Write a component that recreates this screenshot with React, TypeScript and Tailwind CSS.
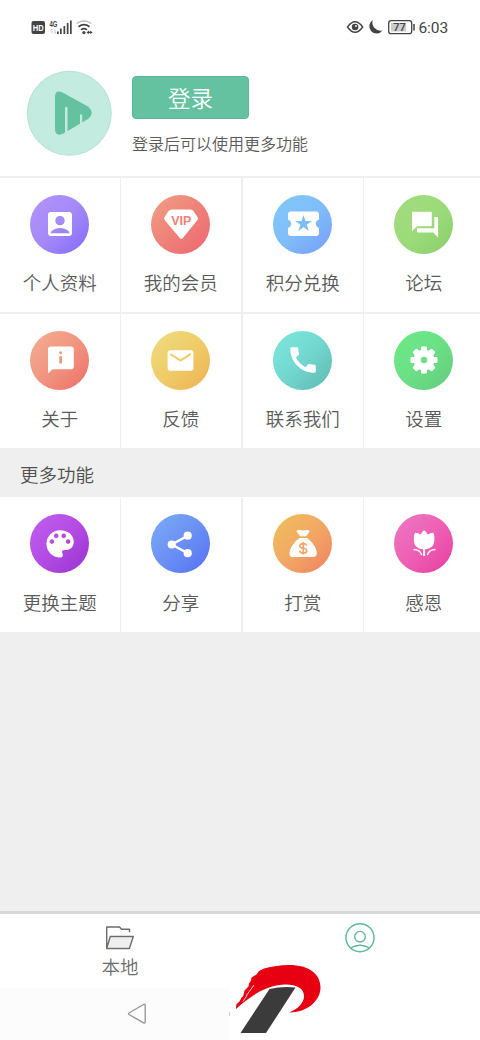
import type { ReactNode } from "react";
import { MdAccountBox, MdCall, MdEmail } from "react-icons/md";

type Item = { label: string; tone: string; icon: ReactNode };

const Glyph = ({ children }: { children: ReactNode }) => (
  <svg viewBox="0 0 60 60" className="size-[60px]" fill="currentColor">
    {children}
  </svg>
);

const VipIcon = () => (
  <Glyph>
    <path d="M21 15.500h18.500q2 0 3 1.600l4 6q1 1.700-.2 3.200L31.800 44q-1.500 1.700-3 0L13.800 26.300q-1.300-1.500-.2-3.200l4-6q1-1.600 3.400-1.600z" />
    <text x="30.300" y="31.400" textAnchor="middle" className="fill-[#ef8078] font-['Liberation_Sans'] text-[12px] font-bold" textLength="20" lengthAdjust="spacingAndGlyphs">VIP</text>
  </Glyph>
);

const TicketIcon = () => (
  <Glyph>
    <path fillRule="evenodd" d="M18 17.500h25q3 0 3 3v5q-3.200 1.300-3.200 4.200t3.200 4.200v5q0 3-3 3H18q-3 0-3-3v-5q3.200-1.300 3.200-4.200T15 25.500v-5q0-3 3-3zM30.500 21l-2 6h-6.400l5.200 3.800-2 6.200 5.200-3.800 5.200 3.800-2-6.200 5.200-3.800h-6.400z" />
  </Glyph>
);

const ForumIcon = () => (
  <Glyph>
    <path d="M19 17.800h18q.8 0 .8 1v12.400q0 1-1 1H23l-5 5V18.800q0-1 1-1z" />
    <path d="M40.300 23h2.900q.9 0 .9 1v19.500l-4.800-5H24q-1 0-1-1V34.300h17.300z" />
  </Glyph>
);

const AboutIcon = () => (
  <Glyph>
    <path fillRule="evenodd" d="M21 16.500h20q2.800 0 2.800 2.800v17.200q0 2.800-2.800 2.800H22.500l-4.500 4.200V19.300q0-2.800 3-2.800zM30.600 21.200a1.500 1.500 0 1 0 .1 0zM29.300 26.300v7.200h2.700v-7.200z" />
  </Glyph>
);

const teeth = ["rotate(0 30 30)", "rotate(45 30 30)", "rotate(90 30 30)", "rotate(135 30 30)"];

const GearIcon = () => (
  <Glyph>
    {teeth.map((turn) => (
      <rect key={turn} x="27" y="16.500" width="6" height="27" rx="1" transform={turn} />
    ))}
    <circle cx="30" cy="30" r="10.500" />
    <circle cx="30" cy="30" r="3.200" className="fill-[#6be085]" />
  </Glyph>
);

const PaletteIcon = () => (
  <Glyph>
    <path fillRule="evenodd" d="M30 16.200c8 0 13.800 5 13.800 11.500 0 5.300-3.800 8.300-8 8.300-3.200 0-4.300.6-3.500 2.900.9 2.700.8 4.500-2.300 4.500A13.600 13.600 0 0 1 30 16.200zM26.200 19.600a2.300 2.300 0 1 0 .01 0zM33.700 19.600a2.300 2.300 0 1 0 .01 0zM21.900 25.300a2.300 2.300 0 1 0 .01 0zM38.100 25.300a2.300 2.300 0 1 0 .01 0z" />
  </Glyph>
);

const ShareIcon = () => (
  <Glyph>
    <path d="M36.500 22L20.500 30.500L36.500 39" fill="none" stroke="currentColor" strokeWidth="2.400" />
    <circle cx="36.700" cy="21.700" r="4.100" />
    <circle cx="20.700" cy="30.500" r="4.100" />
    <circle cx="36.700" cy="39.200" r="4.100" />
  </Glyph>
);

const MoneyIcon = () => (
  <Glyph>
    <path d="M24.500 16.300c2.200-1 3.300.2 5.400.2s3.700-1.200 5.800-.2c1.300.6.900 1.300.3 2.100L33 22.300h-5.600l-3.400-4c-.7-.8-.5-1.400.5-2z" />
    <path d="M26.500 24h7.400c4.800 3 9.900 10 9.900 15 0 2.800-1.200 4-3.700 4H20c-2.700 0-3.800-1.300-3.500-4 .5-5.100 5-11.500 10-15z" />
    <path d="M33.700 31.500c-.6-1.400-1.700-1.900-3.400-1.900-4.400 0-4.700 4.300 0 4.700 4.700.5 4.500 4.800 0 4.800-2 0-3.300-.7-3.800-2.200M30.200 28v12.600" fill="none" className="stroke-[#f3a365]" strokeWidth="1.600" />
  </Glyph>
);

const TulipIcon = () => (
  <Glyph>
    <path d="M30.100 16.300c1.300.8 2.600 2.300 3.500 4.300q2.800-1.800 5.600-1.800c1.500 2 1.400 5.600 1 9-.5 4.700-4.500 7.300-9.100 7.500V42h-1.900v-6.700c-4.600-.2-8.600-2.800-9.100-7.500-.4-3.300-.5-7 1-9q2.800 0 5.600 1.800c.8-2 2.100-3.500 3.400-4.300z" />
    <path d="M19.500 35.600q6.500 0 8.200 5.500M41.500 35.600q-6.500 0-8.200 5.500" fill="none" stroke="currentColor" strokeWidth="1.500" />
  </Glyph>
);

const firstRow: Item[] = [
  { label: "个人资料", tone: "from-[#b295f8] via-[#a589f8] to-[#8369fb]", icon: <MdAccountBox className="size-8" /> },
  { label: "我的会员", tone: "from-[#f0a184] via-[#ef8179] to-[#ec6673]", icon: <VipIcon /> },
  { label: "积分兑换", tone: "from-[#81cafa] via-[#80bdf9] to-[#779cfa]", icon: <TicketIcon /> },
  { label: "论坛", tone: "from-[#a2dc7f] via-[#9ddb7a] to-[#89ce6c]", icon: <ForumIcon /> },
];
const secondRow: Item[] = [
  { label: "关于", tone: "from-[#f3ae92] via-[#f19580] to-[#ec6d68]", icon: <AboutIcon /> },
  { label: "反馈", tone: "from-[#eddd82] via-[#efcc68] to-[#edb055]", icon: <MdEmail className="size-[31px]" /> },
  { label: "联系我们", tone: "from-[#7be9de] via-[#73d7d0] to-[#5db9b0]", icon: <MdCall className="size-[34px]" /> },
  { label: "设置", tone: "from-[#6beb89] via-[#6be085] to-[#65ca7d]", icon: <GearIcon /> },
];
const moreRow: Item[] = [
  { label: "更换主题", tone: "from-[#c060f0] via-[#b44be4] to-[#9831cf]", icon: <PaletteIcon /> },
  { label: "分享", tone: "from-[#7cacf5] via-[#6b90f5] to-[#5470f3]", icon: <ShareIcon /> },
  { label: "打赏", tone: "from-[#eec059] via-[#f2a865] to-[#ee805f]", icon: <MoneyIcon /> },
  { label: "感恩", tone: "from-[#ea78c2] via-[#ee60b5] to-[#e63a9e]", icon: <TulipIcon /> },
];

function Row({ items }: { items: Item[] }) {
  return (
    <div className="grid grid-cols-[121px_122px_121px_120px] overflow-hidden bg-white">
      {items.map((item) => (
        <div
          key={item.label}
          className="flex h-full flex-col items-center border-r border-[#efefef] pt-[16.500px] last:border-r-0 nth-2:border-r-2"
        >
          <div className={`mr-[.4px] flex size-[59px] shrink-0 items-center justify-center rounded-full bg-linear-to-br text-white *:shrink-0 ${item.tone}`}>
            {item.icon}
          </div>
          <span className="mt-[14.500px] mr-[.5px] text-[18.500px] leading-7 text-[#5a5a5a]">{item.label}</span>
        </div>
      ))}
    </div>
  );
}

function StatusBar() {
  return (
    <div className="flex h-[54px] items-center justify-between pr-8 pl-[31px] text-[#444]">
      <svg viewBox="31 16 64 22" className="h-[22px] w-16" fill="currentColor">
        <rect x="31.500" y="21" width="13.500" height="13" rx="2" />
        <text x="38.200" y="30.800" textAnchor="middle" className="fill-white font-['Liberation_Sans'] text-[8.500px] font-bold" textLength="11" lengthAdjust="spacingAndGlyphs">HD</text>
        <text x="49.500" y="26.600" className="font-['Liberation_Sans'] text-[8.500px] font-bold" textLength="8" lengthAdjust="spacingAndGlyphs">4G</text>
        <path d="M52 29v4.500M50.500 30.500L52 29M55 29v4.500l1.200-1.500" fill="none" stroke="#bbb" strokeWidth=".8" />
        <path d="M57 31.500h1.700v2.500H57zM60 28.500h1.700V34H60zM63.500 26h1.700v8h-1.700zM66.800 23h1.700v11h-1.700zM70 20.500h1.700V34H70z" />
        <path d="M76.500 23.500q7.500-5 15 0" fill="none" stroke="#bbb" strokeWidth="1.500" />
        <path d="M78.500 26.700q5.500-4 11 0M81 29.800q3-2.300 6 0" fill="none" stroke="currentColor" strokeWidth="1.700" />
        <circle cx="83.900" cy="32.600" r="1.600" />
        <path d="M86.500 32.500l2.500-2v1.200h1.200v-1.200l2.500 2-2.500 1.600v-1h-1.200v1z" />
      </svg>
      <div className="flex items-center">
        <svg viewBox="346 16 70 22" className="h-[22px] w-[70px]" fill="currentColor">
          <path d="M347.500 27q7.500-10.500 15.200 0-7.700 10.500-15.200 0z" fill="none" stroke="currentColor" strokeWidth="1.400" />
          <circle cx="355.100" cy="27" r="3.300" />
          <circle cx="356" cy="26" r=".9" fill="white" />
          <path d="M372.800 20a7.300 7.300 0 1 0 9.700 10.500 8.200 8.200 0 0 1-9.700-10.500z" />
          <rect x="388.700" y="20.700" width="23" height="13" rx="2.500" fill="none" stroke="currentColor" strokeWidth="1.300" />
          <path d="M391 23h15v8.500h-15z" fill="#ccc" />
          <path d="M413.300 24h1.500v6.500h-1.500z" />
          <text x="399.500" y="31.200" textAnchor="middle" className="font-['Roboto'] text-[11px] font-medium">77</text>
        </svg>
        <span className="ml-[3px] pt-px font-['Roboto'] text-[15.500px] leading-[22px] font-normal tracking-[-0.1px]">6:03</span>
      </div>
    </div>
  );
}

export default function App() {
  return (
    <main className="flex h-[1040px] w-[480px] flex-col overflow-hidden bg-[#efefef] font-['Noto_Sans_CJK_SC',sans-serif] font-[350]">
      <header className="h-[178px] shrink-0 border-b-2 border-[#efefef] bg-white">
        <StatusBar />
        <div className="flex pt-4 pl-[26px]">
          <svg viewBox="26 70 86 86" className="size-[86px]">
            <circle cx="69.300" cy="113.300" r="42" fill="#c3ebdf" stroke="#b4e3d1" />
            <path d="M55 97Q55 89 62.500 92.500L88 106.500Q95.500 113 88 119L63 133.800Q55 137 55 129z" fill="#65c2a1" />
            <path d="M65 107.500q1.200-1.500 2.500 0V132.500l-2.500 1.500zM80 115q1.100-1.300 2.200 0v9.500L80 126z" fill="#c3ebdf" />
          </svg>
          <div className="ml-5 pt-1.5">
            <button className="flex h-[43px] w-[117px] items-center justify-center rounded-[4px] border border-[#5bb797] bg-[#65c2a1] text-[22.500px] font-[350] text-white">登录</button>
            <p className="mt-3 text-[16px] leading-6 text-[#5a5a5a]">登录后可以使用更多功能</p>
          </div>
        </div>
      </header>
      <section className="grid shrink-0 grid-rows-[134px_134px] gap-y-[2px]">
        <Row items={firstRow} />
        <Row items={secondRow} />
      </section>
      <h2 className="flex h-[49px] shrink-0 items-center pt-1 pl-5 text-[18.500px] font-[350] text-[#505050]">更多功能</h2>
      <section className="grid shrink-0 grid-rows-[135px] bg-white *:pt-[.6px]">
        <Row items={moreRow} />
      </section>
      <div className="flex-1" />
      <nav className="grid h-[77px] shrink-0 grid-cols-2 border-t-[3px] border-[#d9d9d9] bg-white">
        <div className="flex flex-col items-center pt-[10px] text-[#6c6c6c]">
          <svg viewBox="104 924 32 28" className="h-7 w-8" fill="none" stroke="currentColor" strokeWidth="1.400" strokeLinejoin="round">
            <path d="M111 937.500h21l-3.500 10h-20.500z" fill="#efefef" stroke="none" />
            <path d="M106.700 948.500V927h12.800l2 2.300h8v3M106.700 948.500l3.600-12h23l-4 12z" />
          </svg>
          <span className="text-[18.500px] leading-7">本地</span>
        </div>
        <div className="flex flex-col items-center pt-[8px]">
          <svg viewBox="0 0 32 32" className="size-8" fill="none" stroke="#5fb899" strokeWidth="1.400">
            <circle cx="16" cy="15.700" r="14" />
            <circle cx="16" cy="14.700" r="5.300" />
            <path d="M6.500 26q9.500-5.500 19 0" />
          </svg>
        </div>
      </nav>
      <footer className="flex h-[52px] shrink-0 bg-white">
        <div className="flex w-[230px] items-center justify-between bg-[#fcfcfc] pl-[126px]">
          <svg viewBox="0 0 22 24" className="h-6 w-[22px]" fill="none" stroke="#999" strokeWidth="1.400" strokeLinejoin="round">
            <path d="M3 12.500q-1-.8 0-1.500L17.500 2.500q1.700-.8 1.700.8V20q0 1.500-1.700.8z" />
          </svg>
          <span className="h-1 w-px bg-[#ccc]" />
        </div>
        <svg viewBox="230 960 96 80" className="-mt-7 h-20 w-24">
          <path d="M236 1008.500l.3-4 3.200-3 2-4 1.500-1 1.500-6 4-4 .5-3 2-3 .5-3 5-3 2.500-3.500 5-2.500q12-3.500 25-3.500c20 0 31.500 9 31.500 22.500 0 13-13 25-31.500 25 9-3.500 14.500-9.500 15-15.500.5-9-8-13-20-12.500-17.500 1-31.500 10-48 24.500z" fill="#e60012" />
          <path d="M243 1001.500l4-6M246 996l8-11" stroke="white" strokeWidth=".8" />
          <path d="M269.500 989q13-3 26-1.500L266 1033h-25.500z" fill="#3b3b3b" />
        </svg>
      </footer>
    </main>
  );
}
